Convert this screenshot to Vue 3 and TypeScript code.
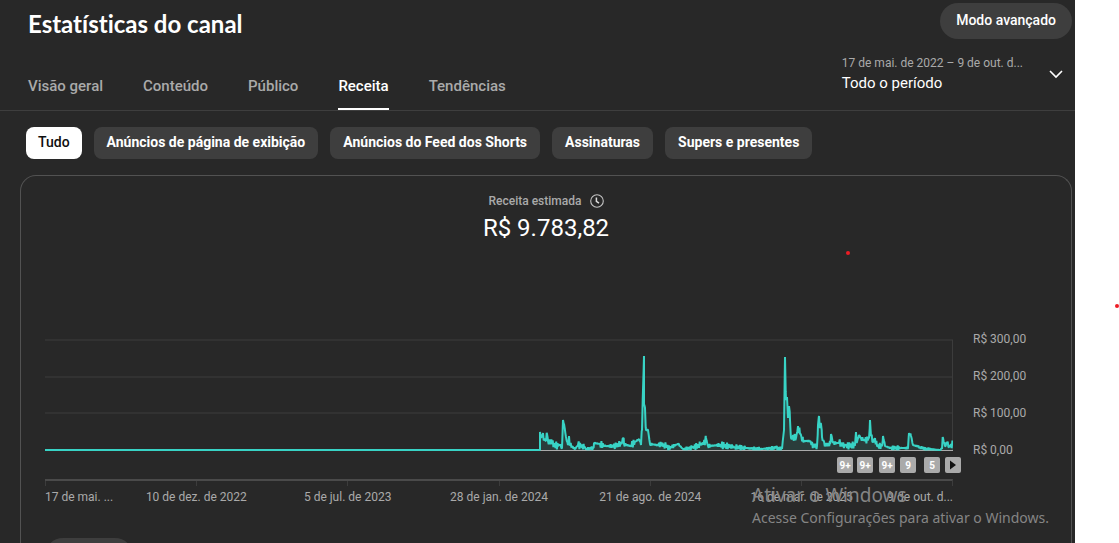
<script setup lang="ts">
import { ref } from 'vue'

const tabs: string[] = ['Visão geral', 'Conteúdo', 'Público', 'Receita', 'Tendências']
const activeTab = ref('Receita')

const filters: string[] = [
  'Tudo',
  'Anúncios de página de exibição',
  'Anúncios do Feed dos Shorts',
  'Assinaturas',
  'Supers e presentes',
]
const activeFilter = ref('Tudo')

const scale: string[] = ['R$ 300,00', 'R$ 200,00', 'R$ 100,00', 'R$ 0,00']
const gridLines: number[] = [4, 41, 77]
const baseline = 114
const plotWidth = 908

const dates: string[] = [
  '17 de mai. ...',
  '10 de dez. de 2022',
  '5 de jul. de 2023',
  '28 de jan. de 2024',
  '21 de ago. de 2024',
  '16 de mar. de 2025',
  '9 de out. d...',
]

interface Marker {
  label: string
  at: number
}
const markers: Marker[] = [
  { label: '9+', at: 800 },
  { label: '9+', at: 820 },
  { label: '9+', at: 842 },
  { label: '9', at: 863 },
  { label: '5', at: 887 },
]

// Revenue samples: [position on the time axis, height above the baseline]
const samples: [number, number][] = [
  [495, 0], [495, 18], [496, 12], [498, 17], [499, 10], [501, 9], [502, 16], [503, 9], [505, 9],
  [507, 6], [513, 4], [515, 5], [517, 2], [518, 30], [519, 26], [521, 13], [523, 5], [524, 14],
  [525, 5], [530, 1], [533, 5], [539, 3], [541, 1], [548, 2], [549, 7], [555, 6], [560, 4],
  [570, 4], [577, 7], [578, 12], [579, 6], [585, 4], [590, 8], [594, 11], [596, 5], [597, 20],
  [598, 60], [599, 94], [599, 46], [600, 42], [601, 20], [603, 20], [605, 6], [612, 5], [619, 6],
  [624, 2], [633, 6], [638, 1], [647, 2], [655, 5], [660, 8], [661, 12], [663, 4], [675, 5],
  [690, 3], [700, 2], [715, 1], [731, 2], [737, 1], [739, 20], [740, 93], [741, 50], [742, 53],
  [743, 32], [744, 44], [745, 30], [746, 12], [749, 13], [751, 12], [753, 24], [755, 16],
  [758, 9], [765, 9], [768, 4], [772, 4], [773, 25], [774, 34], [775, 22], [776, 26], [777, 13],
  [780, 5], [785, 6], [786, 16], [788, 7], [794, 7], [800, 4], [810, 5], [811, 18], [812, 8],
  [814, 15], [816, 12], [820, 9], [824, 12], [825, 30], [826, 14], [828, 8], [830, 12],
  [832, 4], [837, 4], [838, 14], [840, 4], [845, 2], [855, 2], [863, 2], [864, 17], [866, 14],
  [868, 5], [875, 3], [880, 1], [895, 0], [897, 1], [898, 12], [900, 4], [902, 7], [904, 3],
  [906, 6], [908, 6],
]

// Fills the gaps between samples with a small day-to-day variation
function buildLine(): string {
  const points: string[] = [`M0 ${baseline}`]
  samples.forEach(([x, height], index) => {
    points.push(`L${x} ${baseline - height}`)
    const next = samples[index + 1]
    if (!next) return
    for (let day = x + 0.7; day < next[0]; day += 0.7) {
      const ratio = (day - x) / (next[0] - x)
      const mean = height + (next[1] - height) * ratio
      const reach = Math.min(2.2, 0.8 + mean * 0.25)
      const swing = (Math.sin(day * 3.9) + Math.sin(day * 5.3)) * reach
      points.push(`L${day.toFixed(1)} ${(baseline - Math.max(0, mean + swing)).toFixed(1)}`)
    }
  })
  return points.join(' ')
}
const line = buildLine()
const area = `${line} L${plotWidth} ${baseline} Z`
</script>

<template>
  <div class="page">
    <main class="studio">
      <header class="header">
        <div class="top">
          <h1>Estatísticas do canal</h1>
          <button type="button" class="advanced">Modo avançado</button>
        </div>
        <div class="navigation">
          <nav class="tabs">
            <a
              v-for="tab in tabs"
              :key="tab"
              href="#"
              :class="{ active: tab === activeTab }"
              @click.prevent="activeTab = tab"
            >{{ tab }}</a>
          </nav>
          <button type="button" class="period">
            <span class="period-text">
              <span class="range">17 de mai. de 2022 – 9 de out. d...</span>
              <span class="name">Todo o período</span>
            </span>
            <svg width="16" height="10" viewBox="0 0 16 10" aria-hidden="true">
              <path d="M2 2l6 6 6-6" fill="none" stroke="#fff" stroke-width="1.6" />
            </svg>
          </button>
        </div>
      </header>

      <div class="filters">
        <button
          v-for="filter in filters"
          :key="filter"
          type="button"
          :class="{ active: filter === activeFilter }"
          @click="activeFilter = filter"
        >{{ filter }}</button>
      </div>

      <section class="card">
        <div class="metric">
          <div class="metric-label">
            <span>Receita estimada</span>
            <svg width="14" height="14" viewBox="0 0 14 14" aria-hidden="true">
              <circle cx="7" cy="7" r="6.3" fill="none" stroke="#c4c4c4" stroke-width="1.1" />
              <path d="M6.4 3.4V7.3L9 9.2" fill="none" stroke="#ddd" stroke-width="1.5" />
            </svg>
          </div>
          <div class="metric-value">R$ 9.783,82</div>
        </div>

        <div class="chart">
          <div class="plot">
            <svg class="graph" viewBox="0 0 908 120" preserveAspectRatio="none" role="img" aria-label="Receita estimada">
              <line v-for="y in gridLines" :key="y" x1="0" x2="908" :y1="y" :y2="y" class="grid" />
              <line x1="907.5" x2="907.5" y1="4" y2="114" class="grid" />
              <path :d="area" class="area" />
              <line x1="0" x2="908" y1="114.5" y2="114.5" class="base" />
              <path :d="line" class="line" />
            </svg>
            <div class="markers">
              <button
                v-for="marker in markers"
                :key="marker.at"
                type="button"
                :style="{ left: (marker.at / plotWidth) * 100 + '%' }"
              >{{ marker.label }}</button>
              <button type="button" class="play" aria-label="Vídeo">
                <svg width="8" height="10" viewBox="0 0 8 10"><path d="M1 0.5L7 5L1 9.5Z" fill="#111" /></svg>
              </button>
            </div>
            <div class="ticks"><i v-for="n in 6" :key="n"></i></div>
            <div class="dates">
              <span v-for="date in dates" :key="date">{{ date }}</span>
            </div>
          </div>
          <div class="scale">
            <span v-for="value in scale" :key="value">{{ value }}</span>
          </div>
        </div>

        <button type="button" class="more" aria-label="Ver mais"></button>
      </section>
    </main>

    <i class="dot first"></i>
    <i class="dot second"></i>
    <aside class="activation">
      <div class="activation-title">Ativar o Windows</div>
      <div>Acesse Configurações para ativar o Windows.</div>
    </aside>
  </div>
</template>

<style>
body {
  margin: 0;
  background: #fff;
}
</style>

<style scoped>
* {
  box-sizing: border-box;
}
.page {
  position: relative;
  height: 100vh;
  overflow: hidden;
  padding-right: 44px;
  font-family: Roboto, "Liberation Sans", sans-serif;
}
button {
  border: 0;
  margin: 0;
  padding: 0;
  font: inherit;
  color: inherit;
  cursor: pointer;
}
.studio {
  min-height: 100%;
  background: #282828;
  color: #fff;
}
.header {
  border-bottom: 1px solid #3e3e3e;
}
.top {
  display: flex;
  justify-content: space-between;
  align-items: flex-start;
  padding: 3px 3px 0 28px;
  height: 46px;
}
h1 {
  margin: 5px 0 0;
  font: 700 24px/32px Lato, "Noto Sans", sans-serif;
  font-variant-ligatures: none;
}
.advanced {
  height: 36px;
  padding: 0 16px 2px;
  border-radius: 18px;
  background: #3e3e3e;
  font-size: 14px;
  font-weight: 500;
}
.navigation {
  display: flex;
  justify-content: space-between;
  height: 64px;
}
.tabs {
  display: flex;
  gap: 40px;
  padding-left: 28px;
}
.tabs a {
  padding-top: 29px;
  border-bottom: 2px solid transparent;
  color: #aaa;
  font-size: 15px;
  line-height: 22px;
  font-weight: 500;
  text-decoration: none;
}
.tabs a.active {
  color: #fff;
  border-color: #fff;
}
.period {
  display: flex;
  justify-content: space-between;
  align-items: center;
  gap: 25px;
  height: 56px;
  padding-right: 11px;
  background: none;
  text-align: left;
}
.period-text {
  display: flex;
  flex-direction: column;
}
.range {
  color: #aaa;
  font-size: 12px;
  line-height: 18px;
}
.name {
  font-size: 15px;
  line-height: 22px;
}
.filters {
  display: flex;
  gap: 12px;
  padding: 16px 26px;
}
.filters button {
  height: 32px;
  padding: 0 13px 2px;
  border-radius: 8px;
  background: #3e3e3e;
  font-size: 14px;
  font-weight: 700;
}
.filters .active {
  padding: 0 12px 2px;
  background: #fff;
  color: #0f0f0f;
  font-weight: 500;
}
.card {
  margin: 0 3px 0 20px;
  padding: 16px 24px 24px;
  border: 1px solid #525252;
  border-bottom: 0;
  border-radius: 16px 16px 0 0;
}
.metric {
  display: flex;
  flex-direction: column;
  align-items: center;
}
.metric-label {
  display: flex;
  align-items: center;
  gap: 8px;
  color: #aaa;
  font-size: 12px;
  line-height: 18px;
  font-weight: 500;
}
.metric-value {
  font-size: 24px;
  line-height: 36px;
}
.chart {
  display: flex;
  gap: 20px;
  margin-top: 90px;
}
.plot {
  flex: 1;
}
.graph {
  display: block;
  width: 100%;
  height: 120px;
}
.graph * {
  vector-effect: non-scaling-stroke;
}
.grid {
  stroke: #3c3c3c;
}
.base {
  stroke: #aaa;
}
.area {
  fill: #38d3c5;
  fill-opacity: 0.12;
}
.line {
  fill: none;
  stroke: #38d3c5;
  stroke-width: 2;
  stroke-linejoin: bevel;
}
.markers {
  position: relative;
  height: 23px;
}
.markers button {
  position: absolute;
  top: 1px;
  display: grid;
  place-items: center;
  width: 16px;
  height: 16px;
  border-radius: 2px;
  background: #aaa;
  font-size: 10px;
  font-weight: 700;
  transform: translateX(-50%);
}
.markers .play {
  left: 100%;
}
.ticks {
  display: grid;
  grid-template-columns: repeat(6, 1fr);
  height: 7px;
  border-top: 2px solid #4a4a4a;
  border-right: 1px solid #3c3c3c;
}
.ticks i {
  border-left: 1px solid #3c3c3c;
}
.dates {
  display: grid;
  grid-template-columns: repeat(12, 1fr);
  margin-top: 2px;
  color: #aaa;
  font-size: 12px;
  line-height: 18px;
  white-space: nowrap;
}
.dates span {
  grid-column: span 2;
  text-align: center;
}
.dates span:first-child {
  grid-column: span 1;
  text-align: left;
}
.dates span:last-child {
  grid-column: span 1;
  text-align: right;
}
.scale {
  display: grid;
  grid-template-rows: repeat(4, 37px);
  width: 74px;
  margin-top: -15px;
  color: #aaa;
  font-size: 12px;
  line-height: 37px;
}
.more {
  width: 88px;
  height: 36px;
  margin-top: 32px;
  border-radius: 18px;
  background: #3e3e3e;
}
.dot {
  position: absolute;
  width: 4px;
  height: 4px;
  border-radius: 2px;
  background: #ed1c24;
}
.first {
  top: 251px;
  right: 269px;
}
.second {
  top: 304px;
  right: 0;
}
.activation {
  position: absolute;
  right: 67px;
  bottom: 14px;
  width: 300px;
  color: #858585;
  font: 14px/22px "Noto Sans", "Open Sans", sans-serif;
  white-space: nowrap;
  pointer-events: none;
}
.activation-title {
  font-size: 19px;
  line-height: 24px;
}
</style>
